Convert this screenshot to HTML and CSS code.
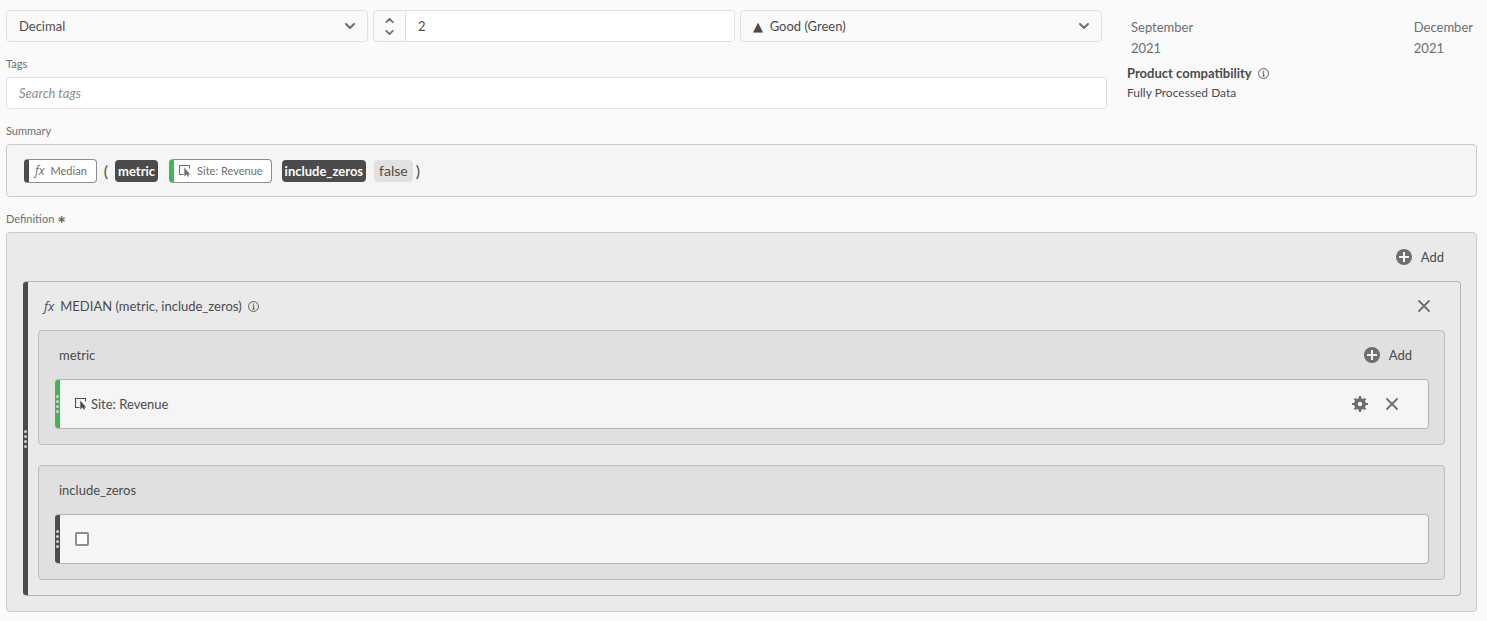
FILE: index.html
```html
<!DOCTYPE html>
<html lang="en">
<head>
    <meta charset="UTF-8">
    <meta name="viewport" content="width=device-width, initial-scale=1.0">
    <title>Calculated metric builder</title>
    <link rel="stylesheet" href="styles.css">
</head>
<body>
    <!-- Shared icons -->
    <svg class="sprite" aria-hidden="true">
        <symbol id="chevron" viewBox="0 0 10 6">
            <path d="M1 1l4 4 4-4" fill="none" stroke="currentColor" stroke-width="2" stroke-linecap="round" stroke-linejoin="round"/>
        </symbol>
        <symbol id="info" viewBox="0 0 10 10">
            <circle cx="5" cy="5" r="4.5" fill="none" stroke="currentColor" stroke-width=".8"/>
            <path d="M4.1 4.4h1v3M4 7.4h2.1" fill="none" stroke="currentColor" stroke-width=".8"/>
            <circle cx="5" cy="2.8" r=".6" fill="currentColor"/>
        </symbol>
        <symbol id="plus" viewBox="0 0 16 16">
            <circle cx="8" cy="8" r="8" fill="currentColor"/>
            <path d="M8 3v10M3 8h10" stroke="#f5f5f5" stroke-width="2"/>
        </symbol>
        <symbol id="cross" viewBox="0 0 12 12">
            <path d="M1 1l10 10M11 1L1 11" stroke="currentColor" stroke-width="1.8" stroke-linecap="round"/>
        </symbol>
        <symbol id="gear" viewBox="0 0 16 16">
            <circle cx="8" cy="8" r="4.1" fill="none" stroke="currentColor" stroke-width="3.8"/>
            <path d="M8 0v3M8 13v3M0 8h3M13 8h3M2.6 2.6l2 2M11.4 11.4l2 2M2.6 13.4l2-2M11.4 4.6l2-2" stroke="currentColor" stroke-width="2.2"/>
        </symbol>
        <symbol id="metric" viewBox="0 0 12 12">
            <path d="M4.5 9.5h-4v-9h10v3" fill="none" stroke="currentColor" stroke-width="1.1"/>
            <path d="M5.3 2.5v9l2-2.1h3.9z" fill="currentColor"/>
            <path d="M8 8.5l1.3 3" stroke="currentColor" stroke-width="1.4"/>
        </symbol>
    </svg>

    <main>
        <div class="top">
            <form class="fields">
                <div class="row">
                    <div class="select">
                        <select aria-label="Format">
                            <option>Decimal</option>
                            <option>Percent</option>
                        </select>
                        <svg class="chevron"><use href="#chevron"/></svg>
                    </div>
                    <div class="stepper">
                        <div class="steps">
                            <button type="button" aria-label="Increase"><svg class="up"><use href="#chevron"/></svg></button>
                            <button type="button" aria-label="Decrease"><svg><use href="#chevron"/></svg></button>
                        </div>
                        <input type="text" inputmode="numeric" aria-label="Decimal places" value="2">
                    </div>
                    <div class="select">
                        <select class="polarity" aria-label="Polarity">
                            <option>&#9650;&nbsp; Good (Green)</option>
                            <option>&#9650;&nbsp; Bad (Red)</option>
                        </select>
                        <svg class="chevron"><use href="#chevron"/></svg>
                    </div>
                </div>
                <label class="label" for="tags">Tags</label>
                <input class="tags" type="text" id="tags" placeholder="Search tags">
            </form>

            <aside>
                <div class="dates">
                    <span>September<br>2021</span>
                    <span>December<br>2021</span>
                </div>
                <h2>Product compatibility <svg class="info"><use href="#info"/></svg></h2>
                <p>Fully Processed Data</p>
            </aside>
        </div>

        <div class="label">Summary</div>
        <section class="summary">
            <span class="chip"><i class="fx">fx</i>Median</span>
            <span class="paren">(</span>
            <span class="token">metric</span>
            <span class="chip green"><svg class="metric-icon"><use href="#metric"/></svg>Site: Revenue</span>
            <span class="token">include_zeros</span>
            <span class="value">false</span>
            <span class="paren">)</span>
        </section>

        <div class="label">Definition <b class="required">&#8727;</b></div>
        <section class="definition">
            <div class="bar">
                <button class="add" type="button"><svg><use href="#plus"/></svg>Add</button>
            </div>

            <div class="function">
                <div class="handle"><i></i><i></i><i></i><i></i></div>
                <div class="function-body">
                    <div class="function-head">
                        <i class="fx">fx</i>
                        <span>MEDIAN (metric, include_zeros)</span>
                        <svg class="info"><use href="#info"/></svg>
                        <button class="icon" type="button" aria-label="Remove function"><svg><use href="#cross"/></svg></button>
                    </div>

                    <div class="param">
                        <div class="param-head">
                            <span>metric</span>
                            <button class="add" type="button"><svg><use href="#plus"/></svg>Add</button>
                        </div>
                        <div class="card">
                            <div class="handle green"><i></i><i></i><i></i><i></i></div>
                            <div class="card-body">
                                <svg class="metric-icon"><use href="#metric"/></svg>
                                <span>Site: Revenue</span>
                                <button class="icon settings" type="button" aria-label="Settings"><svg class="gear"><use href="#gear"/></svg></button>
                                <button class="icon" type="button" aria-label="Remove metric"><svg><use href="#cross"/></svg></button>
                            </div>
                        </div>
                    </div>

                    <div class="param">
                        <div class="param-head">
                            <label for="zeros">include_zeros</label>
                        </div>
                        <div class="card">
                            <div class="handle"><i></i><i></i><i></i><i></i></div>
                            <div class="card-body">
                                <input type="checkbox" id="zeros">
                            </div>
                        </div>
                    </div>
                </div>
            </div>
        </section>
    </main>
</body>
</html>
```

FILE: styles.css
```css
* {
    box-sizing: border-box;
}

body {
    margin: 0;
    background-color: #fafafa;
    color: #4b4b4b;
    font-family: Lato, "DejaVu Sans", sans-serif;
    font-size: 13px;
    line-height: 20px;
}

main {
    padding: 10px 10px 9px 6px;
}

input,
select,
button {
    font: inherit;
    color: inherit;
}

button {
    padding: 0;
    border: none;
    background: none;
    cursor: pointer;
}

svg {
    display: block;
    flex: none;
}

.sprite {
    position: absolute;
    width: 0;
    height: 0;
}

/* Top fields */
.top {
    display: grid;
    grid-template-columns: 1101fr 350fr;
    gap: 20px;
}

.row {
    display: grid;
    grid-template-columns: repeat(3, 1fr);
    gap: 5px;
    padding-right: 5px;
}

.select {
    position: relative;
}

.select select {
    width: 100%;
    height: 32px;
    padding: 0 12px;
    appearance: none;
    background-color: #fafafa;
    border: 1px solid #e0e0e0;
    border-radius: 4px;
}

.chevron {
    position: absolute;
    top: 13px;
    right: 13px;
    width: 10px;
    height: 6px;
    color: #6e6e6e;
    pointer-events: none;
}

.stepper {
    display: flex;
    height: 32px;
    border: 1px solid #e0e0e0;
    border-radius: 4px;
    overflow: hidden;
}

.steps {
    display: flex;
    flex-direction: column;
    width: 32px;
    padding: 3px 0;
    border-right: 1px solid #e0e0e0;
}

.steps button {
    display: flex;
    flex: 1;
    align-items: center;
    justify-content: center;
    color: #6e6e6e;
}

.steps svg {
    width: 9px;
    height: 5px;
}

.up {
    transform: rotate(180deg);
}

.stepper input {
    flex: 1;
    min-width: 0;
    padding: 0 12px;
    border: none;
    background-color: #fff;
}

.label {
    display: block;
    margin: 13px 0 4px;
    font-size: 11px;
    line-height: 18px;
    color: #6e6e6e;
}

.required {
    font-family: "DejaVu Sans", sans-serif;
    line-height: 1;
}

.tags {
    display: block;
    width: 100%;
    height: 32px;
    padding: 0 12px;
    background-color: #fff;
    border: 1px solid #e0e0e0;
    border-radius: 4px;
}

.tags::placeholder {
    color: #8e8e8e;
    font-style: italic;
}

/* Right column */
.dates {
    display: flex;
    justify-content: space-between;
    padding: 7px 4px 4px;
    line-height: 21px;
    color: #6e6e6e;
}

h2 {
    display: flex;
    align-items: center;
    gap: 6px;
    margin: 0;
    font-size: 13px;
    line-height: 20px;
}

aside p {
    margin: 0;
    font-size: 12px;
}

.info {
    width: 11px;
    height: 11px;
}

/* Summary */
.summary {
    display: flex;
    align-items: center;
    height: 53px;
    padding: 0 17px;
    background-color: #f5f5f5;
    border: 1px solid #cacaca;
    border-radius: 4px;
}

.chip {
    display: flex;
    align-items: center;
    gap: 6px;
    height: 24px;
    padding: 0 9px 0 6px;
    background-color: #fff;
    border: 1px solid #8e8e8e;
    border-left: 5px solid #4b4b4b;
    border-radius: 4px;
    font-size: 11px;
    color: #6e6e6e;
}

.chip.green {
    padding: 0 8px 0 5px;
    border-left-color: #44b556;
}

.fx {
    font-family: "Open Sans", sans-serif;
}

.chip .fx {
    font-size: 12px;
}

.metric-icon {
    width: 12px;
    height: 12px;
}

.paren {
    padding: 0 7px;
    font-size: 16px;
}

.value + .paren {
    padding: 0 3px;
}

.token {
    padding: 1px 3px;
    margin-right: 11px;
    background-color: #4b4b4b;
    border-radius: 4px;
    color: #fff;
    font-weight: bold;
}

.chip + .token {
    margin: 0 8px 0 10px;
}

.value {
    padding: 1px 5px;
    background-color: #e1e1e1;
    border-radius: 4px;
    font-size: 14px;
}

/* Definition */
.definition {
    padding: 0 15px 15px 16px;
    background-color: #eaeaea;
    border: 1px solid #cacaca;
    border-radius: 4px;
}

.bar {
    display: flex;
    align-items: center;
    justify-content: flex-end;
    height: 48px;
    padding-right: 17px;
}

.add {
    display: flex;
    align-items: center;
    gap: 9px;
}

.add svg {
    width: 16px;
    height: 16px;
    color: #6e6e6e;
}

.function,
.card {
    display: flex;
    border: 1px solid #b3b3b3;
    border-left-width: 0;
    border-radius: 4px;
}

.handle {
    display: flex;
    flex: none;
    flex-direction: column;
    align-items: center;
    justify-content: center;
    gap: 2px;
    width: 5px;
    background-color: #4b4b4b;
    border-radius: 3px 0 0 3px;
}

.handle.green {
    background-color: #44b556;
}

.handle i {
    width: 3px;
    height: 3px;
    border-radius: 50%;
    background-color: #d0d0d0;
}

.function-body {
    flex: 1;
    padding: 0 15px 15px 10px;
}

.function-head {
    display: flex;
    align-items: center;
    gap: 6px;
    height: 48px;
    padding: 0 15px 0 6px;
}

.icon {
    display: flex;
    justify-content: center;
    width: 12px;
    margin-left: auto;
    color: #6e6e6e;
}

.icon svg {
    width: 12px;
    height: 12px;
}

.param {
    padding: 0 15px 15px 16px;
    background-color: #e0e0e0;
    border: 1px solid #bcbcbc;
    border-radius: 4px;
}

.param + .param {
    margin-top: 20px;
}

.param-head {
    display: flex;
    align-items: center;
    justify-content: space-between;
    height: 48px;
    padding: 0 17px 0 4px;
}

.card {
    height: 50px;
    background-color: #f5f5f5;
}

.card-body {
    display: flex;
    flex: 1;
    align-items: center;
    gap: 4px;
    padding: 0 30px 0 15px;
}

.settings {
    width: 16px;
}

.settings + .icon {
    margin-left: 14px;
}

.icon .gear {
    width: 16px;
    height: 16px;
}

.card input {
    width: 14px;
    height: 14px;
    margin: 0;
    appearance: none;
    background-color: #fff;
    border: 2px solid #8e8e8e;
    border-radius: 2px;
}

.card input:checked {
    background-color: #4b4b4b;
}
```
